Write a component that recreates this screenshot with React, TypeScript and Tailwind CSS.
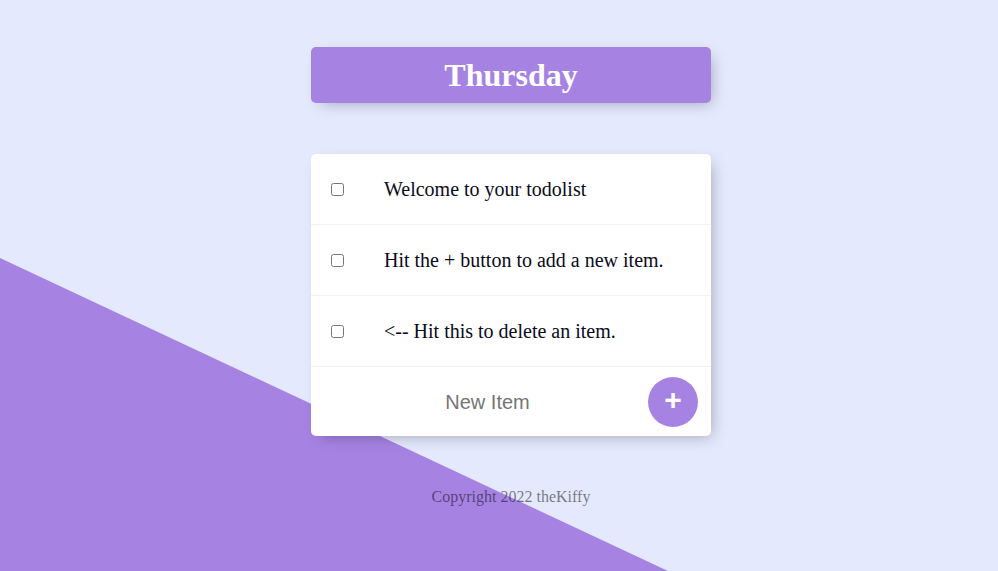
export default function App() {
  const items = [
    "Welcome to your todolist",
    "Hit the + button to add a new item.",
    "<-- Hit this to delete an item.",
  ];

  return (
    <div className="relative min-h-[571px] w-full overflow-hidden bg-[#E4E9FD] font-['Liberation_Serif',serif]">
      {/* diagonal background shape */}
      <div className="absolute inset-0 bg-[#A683E3] [clip-path:polygon(0_258px,668px_571px,0_571px)]" />

      <div className="relative flex flex-col items-center pl-[24px]">
        {/* Heading */}
        <div className="mt-[47px] w-[400px] rounded-[5px] bg-[#A683E3] shadow-[5px_5px_15px_-5px_rgba(0,0,0,0.3)]">
          <h1 className="py-[9px] text-center text-[32px] font-bold leading-[38px] text-white">Thursday</h1>
        </div>

        {/* List */}
        <div className="mt-[51px] w-[400px] rounded-[5px] bg-white shadow-[5px_5px_15px_-5px_rgba(0,0,0,0.3)]">
          {items.map((text) => (
            <div key={text} className="flex h-[71px] items-center border-b border-[#F1F1F1]">
              <input type="checkbox" className="m-5 h-[13px] w-[13px]" />
              <p className="p-5 text-[20px] leading-[23px] text-[#0b0b20]">{text}</p>
            </div>
          ))}
          <form className="ml-5 flex h-[69px] items-center" onSubmit={(e) => e.preventDefault()}>
            <input
              type="text"
              placeholder="New Item"
              className="h-[60px] w-[313px] border-none pt-[2px] text-center font-['Liberation_Sans',sans-serif] text-[20px] font-extralight outline-none placeholder:text-[#757575]"
            />
            <button
              type="submit"
              className="ml-[4px] flex h-[50px] w-[50px] items-center justify-center rounded-full bg-[#A683E3] pb-[4px] font-['Liberation_Sans',sans-serif] text-[30px] font-bold text-white"
            >
              +
            </button>
          </form>
        </div>

        {/* Footer */}
        <footer className="mt-[49px] text-center text-[16px] text-black/50">Copyright 2022 theKiffy</footer>
      </div>
    </div>
  );
}
